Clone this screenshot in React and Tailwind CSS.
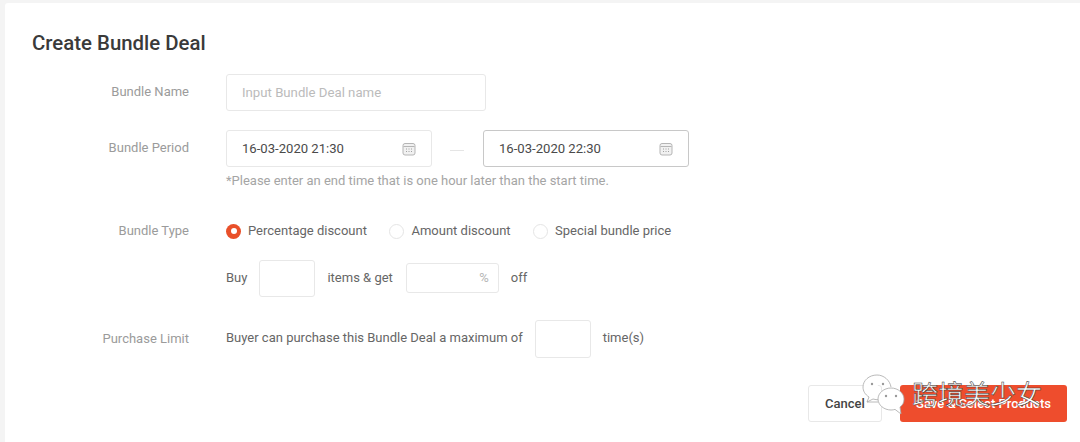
function CalendarIcon() {
  return (
    <svg width="14" height="14" viewBox="0 0 14 14" fill="none" className="shrink-0">
      <rect x="1" y="1.5" width="12" height="11.5" rx="2" fill="#f1f1f1" stroke="#b5b5b5" />
      <path d="M1.5 4.5h11" stroke="#b5b5b5" />
      <path d="M4 7h1M6.5 7h1M9 7h1M4 9.5h1M6.5 9.5h1M9 9.5h1" stroke="#a0a0a0" />
    </svg>
  );
}

function DateInput({ value, strong }) {
  return (
    <div className={`w-[206px] h-[37px] flex items-center justify-between pl-[15px] pr-[15px] rounded-[3px] border ${strong ? 'border-[#c8c8c8]' : 'border-[#e8e8e8]'}`}>
      <span className="text-[13.1px] text-[#4a4a4a]">{value}</span>
      <CalendarIcon />
    </div>
  );
}

function Radio({ label, checked }) {
  return (
    <div className="flex items-center gap-[7px]">
      {checked ? (
        <span className="w-[15px] h-[15px] rounded-full bg-[#e9502a] flex items-center justify-center">
          <span className="w-[6px] h-[6px] rounded-full bg-white" />
        </span>
      ) : (
        <span className="w-[15px] h-[15px] rounded-full border border-[#e5e5e5]" />
      )}
      <span>{label}</span>
    </div>
  );
}

function Row({ label, className, children }) {
  return (
    <div className={`flex ${className}`}>
      <div className="w-[157px] shrink-0 text-right text-[13px] text-[#9b9b9b]">{label}</div>
      <div className="ml-[37px] flex-1">{children}</div>
    </div>
  );
}

function Watermark() {
  return (
    <div className="absolute left-[862px] top-[374px] flex items-start">
      <svg width="48" height="46" viewBox="0 0 48 46" fill="none" stroke="#a8a8a8" strokeWidth="0.8">
        <path d="M15 1C7 1 1 6.500 1 13c0 4 2 7.500 6 10l-2 5 6-3c2 .6 4 .8 6 .8" fill="#fff" />
        <path d="M29 13C28 6.500 22 1 15 1" />
        <path d="M29 14c-7 0-13 5-13 11s6 11 13 11c1.500 0 3-.2 4-.6l6 4.600-1-7c3-2 4-5 4-8 0-6-6-11-13-11z" fill="#fff" />
        <path d="M5 28h11" />
        <circle cx="10" cy="10" r="1.200" fill="#999" stroke="none" />
        <circle cx="21" cy="10" r="1.200" fill="#999" stroke="none" />
        <circle cx="24" cy="22" r="1.200" fill="#999" stroke="none" />
        <circle cx="34" cy="22" r="1.200" fill="#999" stroke="none" />
      </svg>
      <span className="ml-[2px] mt-[4px] text-[26px] leading-[30px] whitespace-nowrap text-white font-['Noto_Sans_CJK_SC',sans-serif] [-webkit-text-stroke:0.5px_#333]">跨境美少女</span>
    </div>
  );
}

export default function App() {
  return (
    <div className="relative w-[1080px] h-[442px] overflow-hidden bg-[#f4f4f4] pl-[5px] pt-[3px] font-['Roboto',sans-serif]">
      <div className="h-full bg-white rounded-tl-[3px] pl-[27px] pr-[13px] pt-[28px] text-[13px] text-[#666]">
        <h1 className="text-[20.4px] leading-[24px] font-medium text-[#3a3a3a]">Create Bundle Deal</h1>

        <Row label="Bundle Name" className="mt-[19px] leading-[36px]">
          <div className="w-[260px] h-[37px] flex items-center pl-[15px] rounded-[3px] border border-[#e8e8e8] text-[13.2px] text-[#bbb]">
            Input Bundle Deal name
          </div>
        </Row>

        <Row label="Bundle Period" className="mt-[19px] leading-[36px]">
          <div className="flex items-center">
            <DateInput value="16-03-2020 21:30" />
            <span className="w-[14px] h-px bg-[#e5e5e5] ml-[18px] mr-[19px] mt-[3px]" />
            <DateInput value="16-03-2020 22:30" strong />
          </div>
          <p className="mt-[6px] text-[13px] tracking-[-0.01px] leading-[16px] text-[#a5a5a5]">*Please enter an end time that is one hour later than the start time.</p>
        </Row>

        <Row label="Bundle Type" className="mt-[34px] leading-[16px]">
          <div className="flex items-center gap-[22.5px]">
            <Radio label="Percentage discount" checked />
            <Radio label="Amount discount" />
            <Radio label="Special bundle price" />
          </div>
          <div className="flex items-center mt-[21px]">
            <span className="mb-[2px]">Buy</span>
            <div className="w-[56px] h-[37px] ml-[12px] rounded-[3px] border border-[#e8e8e8]" />
            <span className="ml-[12px] mb-[2px]">items &amp; get</span>
            <div className="w-[93px] h-[30px] ml-[13px] mb-[2px] pr-[9px] flex items-center justify-end rounded-[3px] border border-[#e8e8e8] text-[#b5b5b5]">%</div>
            <span className="ml-[12px] mb-[2px]">off</span>
          </div>
        </Row>

        <Row label="Purchase Limit" className="mt-[23px] items-center">
          <div className="flex items-center">
            <span className="mb-[2px]">Buyer can purchase this Bundle Deal a maximum of</span>
            <div className="w-[56px] h-[38px] ml-[12px] rounded-[3px] border border-[#e8e8e8]" />
            <span className="ml-[12px] mb-[2px]">time(s)</span>
          </div>
        </Row>

        <div className="flex justify-end mt-[27px] gap-[18px]">
          <button className="w-[74px] h-[37px] rounded-[3px] border border-[#e8e8e8] bg-white text-[13px] font-medium text-[#444]">Cancel</button>
          <button className="w-[167px] h-[37px] rounded-[3px] bg-[#ee4d2d] text-[13px] font-medium text-white">Save &amp; Select Products</button>
        </div>
      </div>
      <Watermark />
    </div>
  );
}
